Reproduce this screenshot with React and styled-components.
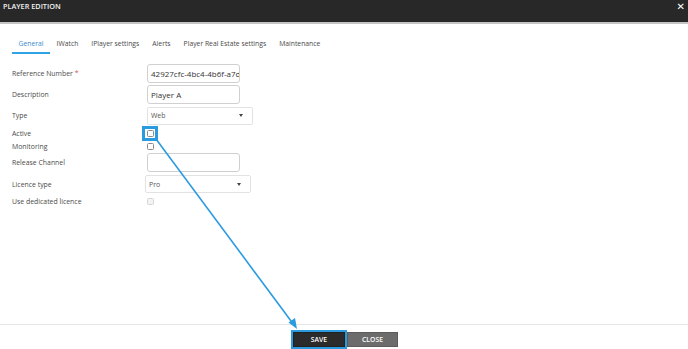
import styled, { createGlobalStyle } from 'styled-components'

const GlobalStyle = createGlobalStyle`
  html, body {
    margin: 0;
    padding: 0;
    background: #fff;
  }
  body {
    font-family: "Open Sans", "Noto Sans", sans-serif;
  }
`

const Page = styled.div`
  position: relative;
  width: 688px;
  height: 349px;
  display: flex;
  flex-direction: column;
  overflow: hidden;
`

const Header = styled.div`
  height: 22px;
  background: #282828;
  border-bottom: 2px solid #c4c4c4;
  display: flex;
  align-items: center;
  justify-content: space-between;
  padding: 0 3px 0 3px;
  box-sizing: content-box;
  flex-shrink: 0;
`

const Title = styled.div`
  color: #f2f2f2;
  font-size: 7.3px;
  font-weight: 600;
  margin-top: -10px;
`

const CloseX = styled.div`
  color: #fff;
  font-family: "DejaVu Sans", sans-serif;
  font-size: 10px;
  font-weight: 700;
  margin-top: -9px;
`

const Tabs = styled.div`
  display: flex;
  padding: 11px 0 0 12px;
  height: 19px;
  flex-shrink: 0;
`

const Tab = styled.div`
  padding: 0 6.5px;
  font-size: 6.8px;
  color: ${p => (p.$active ? '#3d8bcd' : '#4a4a4a')};
  border-bottom: 2px solid ${p => (p.$active ? '#2fa3e6' : 'transparent')};
  display: flex;
  align-items: center;
  white-space: nowrap;
`

const Form = styled.div`
  padding: 9px 0 0 12px;
  display: flex;
  flex-direction: column;
  flex: 1;
`

const Row = styled.div`
  display: grid;
  grid-template-columns: 135px 1fr;
  align-items: center;
  height: ${p => p.$h}px;
`

const Label = styled.div`
  font-size: 6.9px;
  color: #4a4a4a;
`

const Req = styled.span`
  color: #d9534f;
`

const TextBox = styled.div`
  width: 93px;
  height: 19px;
  box-sizing: border-box;
  border: 1px solid #d0d0d0;
  border-radius: 3px;
  padding: 0 3px;
  font-size: 8px;
  color: #333;
  display: flex;
  align-items: center;
  overflow: hidden;
  white-space: nowrap;
`

const Select = styled.div`
  width: 106px;
  height: 18px;
  box-sizing: border-box;
  border: 1px solid #e2e2e2;
  border-radius: 2px;
  padding: 0 9px 0 3px;
  font-size: 6.9px;
  color: #555;
  display: flex;
  align-items: center;
  justify-content: space-between;
  margin-left: ${p => p.$shift || 0}px;
`

const Caret = styled.span`
  width: 0;
  height: 0;
  border-left: 2.5px solid transparent;
  border-right: 2.5px solid transparent;
  border-top: 3px solid #444;
`

const Check = styled.div`
  width: 7px;
  height: 7px;
  box-sizing: border-box;
  border: 1px solid ${p => (p.$disabled ? '#d6d6d6' : '#8a8a8a')};
  border-radius: 1.5px;
  background: ${p => (p.$disabled ? '#f4f4f4' : '#fff')};
`

const Footer = styled.div`
  border-top: 1px solid #e6e6e6;
  height: 17px;
  display: flex;
  justify-content: center;
  align-items: flex-start;
  padding-top: 7px;
  gap: 2px;
  padding-left: 3px;
  flex-shrink: 0;
`

const Button = styled.div`
  width: ${p => p.$w}px;
  height: 15px;
  background: ${p => (p.$primary ? '#2b2b2b' : '#6c6c6c')};
  color: #fff;
  font-size: 6.8px;
  font-weight: 600;
  display: flex;
  align-items: center;
  justify-content: center;
  box-sizing: border-box;
  border: 1px solid ${p => (p.$primary ? '#222' : '#5c5c5c')};
`

const Overlay = styled.svg`
  position: absolute;
  left: 0;
  top: 0;
  pointer-events: none;
`

const tabs = ['General', 'IWatch', 'IPlayer settings', 'Alerts', 'Player Real Estate settings', 'Maintenance']

export default function App() {
  return (
    <>
      <GlobalStyle />
      <Page>
        <Header>
          <Title>PLAYER EDITION</Title>
          <CloseX>✕</CloseX>
        </Header>
        <Tabs>
          {tabs.map((t, i) => (
            <Tab key={t} $active={i === 0}>{t}</Tab>
          ))}
        </Tabs>
        <Form>
          <Row $h={21}>
            <Label>Reference Number <Req>*</Req></Label>
            <TextBox>42927cfc-4bc4-4b6f-a7d3</TextBox>
          </Row>
          <Row $h={21}>
            <Label>Description</Label>
            <TextBox>Player A</TextBox>
          </Row>
          <Row $h={21}>
            <Label>Type</Label>
            <Select>Web<Caret /></Select>
          </Row>
          <Row $h={14}>
            <Label>Active</Label>
            <Check />
          </Row>
          <Row $h={12}>
            <Label>Monitoring</Label>
            <Check />
          </Row>
          <Row $h={21}>
            <Label>Release Channel</Label>
            <TextBox />
          </Row>
          <Row $h={22}>
            <Label>Licence type</Label>
            <Select $shift={-2}>Pro<Caret /></Select>
          </Row>
          <Row $h={12}>
            <Label>Use dedicated licence</Label>
            <Check $disabled />
          </Row>
        </Form>
        <Footer>
          <Button $primary $w={52}>SAVE</Button>
          <Button $w={51}>CLOSE</Button>
        </Footer>
        <Overlay width="688" height="349" viewBox="0 0 688 349">
          <rect x="143.5" y="127.5" width="13" height="12" fill="none" stroke="#2b9be0" strokeWidth="3" />
          <rect x="292" y="331" width="54" height="17" fill="none" stroke="#2b9be0" strokeWidth="2" />
          <line x1="156" y1="139" x2="294" y2="325" stroke="#2b9be0" strokeWidth="1.6" />
          <polygon points="297,329 288.5,322.5 295,318" fill="#2b9be0" />
        </Overlay>
      </Page>
    </>
  )
}
